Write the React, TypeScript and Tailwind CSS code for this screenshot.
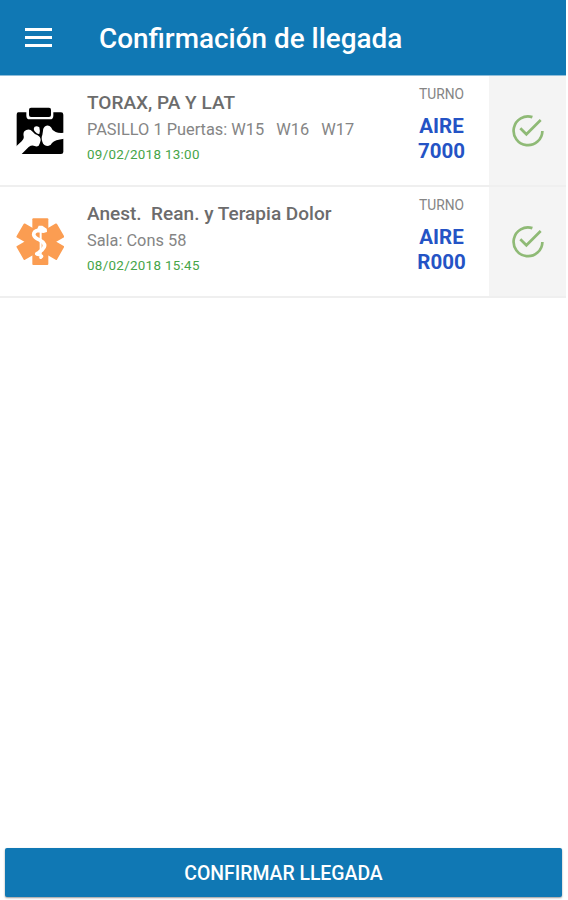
import React from "react";

function XrayIcon() {
  return (
    <svg className="block h-[48px] w-[48px]" viewBox="49 49 144 144">
      <path
        fill="#000"
        d="M56 65H80V75Q80 86 90 86H151Q161 86 161 75V65H184Q191 65 191 72V184Q191 190 184 190H57Q51 190 51 184V72Q51 65 56 65Z"
      />
      <rect x="88" y="51" width="66" height="28" rx="6" fill="#000" />
      <path
        fill="#fff"
        d="M46 170L66 152Q74 146 72 136Q69 122 80 118Q91 114 99 123Q105 131 114 134Q123 139 123 149Q121 160 117 165Q111 169 105 166Q97 162 87 169L63 193H46Z"
      />
      <path
        fill="#fff"
        d="M195 126Q178 128 168 124Q157 120 154 110Q149 103 140 105Q130 109 130 120L128 133Q124 141 128 153Q132 166 145 166Q154 165 157 157Q166 147 195 144Z"
      />
      <path fill="#fff" d="M105 108Q112 105 119 110Q122 120 119 130Q113 131 107 124Q99 115 105 108Z" />
    </svg>
  );
}

function MedicalIcon() {
  return (
    <svg className="block h-[48px] w-[48px]" viewBox="48 52 144 144">
      <g fill="#fb9d52">
        <rect x="97" y="53" width="48" height="140" rx="3" />
        <rect x="97" y="53" width="48" height="140" rx="3" transform="rotate(60 121 123)" />
        <rect x="97" y="53" width="48" height="140" rx="3" transform="rotate(-60 121 123)" />
      </g>
      <g fill="none" stroke="#fff" strokeLinecap="round" strokeLinejoin="round">
        <path strokeWidth="6" d="M122 80V172" />
        <path strokeWidth="11" d="M134 89Q127 91 117 89Q101 90 101 102Q103 112 118 117L129 125Q139 136 127 147L119 153" />
        <path strokeWidth="8" d="M119 153Q105 158 110 161Q117 162 125 165Q128 168 122 171" />
      </g>
      <path fill="#fff" d="M112 84L116 75L127 75L140 84L141 94L130 97L117 94Z" />
    </svg>
  );
}

function CheckIcon() {
  return (
    <svg
      className="block h-[34px] w-[34px]"
      viewBox="0 0 34 34"
      fill="none"
      stroke="#8fba76"
      strokeWidth="2.7"
    >
      <path d="M21.4 3.1A14.4 14.4 0 1 0 31.4 17" />
      <path d="M9.3 14.2L15.4 20.3L29.7 6" />
    </svg>
  );
}

type Appointment = {
  icon: React.ReactNode;
  title: string;
  place: string;
  date: string;
  code: string;
};

const appointments: Appointment[] = [
  {
    icon: <XrayIcon />,
    title: "TORAX, PA Y LAT",
    place: "PASILLO 1 Puertas: W15   W16   W17",
    date: "09/02/2018 13:00",
    code: "7000",
  },
  {
    icon: <MedicalIcon />,
    title: "Anest.  Rean. y Terapia Dolor",
    place: "Sala: Cons 58",
    date: "08/02/2018 15:45",
    code: "R000",
  },
];

function Row({ item }: { item: Appointment }) {
  return (
    <li className="flex h-[111px] border-b-2 border-[#efefef]">
      <div className="flex w-[87px] shrink-0 pt-[31px] pl-[16px]">{item.icon}</div>
      <div className="flex-1 pt-[14px] whitespace-pre">
        <p className="h-[26px] text-[19.05px] leading-[26px] font-medium text-[#6c6c6c]">{item.title}</p>
        <p className="h-[26px] pt-px text-[16.35px] leading-[26px] text-[#858585]">{item.place}</p>
        <p className="h-[26px] text-[13.4px] leading-[26px] tracking-[0.3px] text-[#46a548]">{item.date}</p>
      </div>
      <div className="w-[95px] shrink-0 pt-[8px] text-center">
        <p className="h-[20px] text-[13.8px] leading-[20px] text-[#858585]">TURNO</p>
        <p className="mt-[10px] text-[20.5px] leading-[25px] font-bold text-[#2453c5]">
          AIRE
          <br />
          {item.code}
        </p>
      </div>
      <div className="flex w-[77px] shrink-0 justify-center bg-[#f4f4f4] pt-[38px]">
        <CheckIcon />
      </div>
    </li>
  );
}

export default function App() {
  return (
    <div className="flex h-[900px] w-[566px] flex-col bg-white font-['Roboto',sans-serif]">
      <header className="flex h-[76px] shrink-0 items-center border-b border-[#8fbdd9] bg-[#1078b4]">
        <button className="ml-[25px] flex w-[27px] flex-col gap-[5px]" aria-label="Menú">
          <span className="h-[3px] w-full bg-white" />
          <span className="h-[3px] w-full bg-white" />
          <span className="h-[3px] w-full bg-white" />
        </button>
        <h1 className="ml-[47px] pt-[2px] text-[27.9px] font-medium whitespace-nowrap text-white">Confirmación de llegada</h1>
      </header>
      <ul className="flex-1">
        {appointments.map((item) => (
          <Row key={item.date} item={item} />
        ))}
      </ul>
      <footer className="h-[52px] shrink-0 pr-[4px] pl-[5px]">
        <button className="block h-[49px] w-full rounded-[2px] bg-[#1078b4] pt-[2px] text-[19.4px] font-medium text-white shadow-[0_1px_2px_rgba(0,0,0,0.4)]">
          CONFIRMAR LLEGADA
        </button>
      </footer>
    </div>
  );
}
